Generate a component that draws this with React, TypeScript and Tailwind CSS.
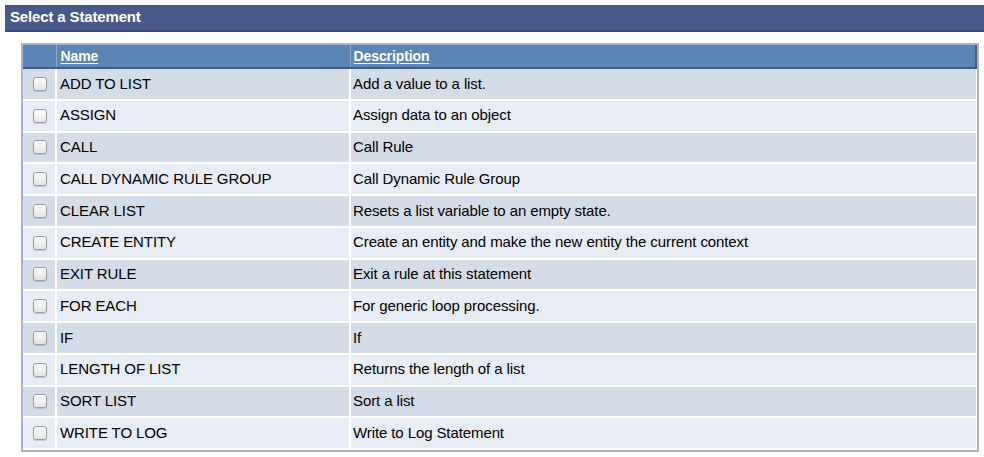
import { useState } from "react";

type Statement = { name: string; description: string };

const statements: Statement[] = [
  { name: "ADD TO LIST", description: "Add a value to a list." },
  { name: "ASSIGN", description: "Assign data to an object" },
  { name: "CALL", description: "Call Rule" },
  { name: "CALL DYNAMIC RULE GROUP", description: "Call Dynamic Rule Group" },
  { name: "CLEAR LIST", description: "Resets a list variable to an empty state." },
  { name: "CREATE ENTITY", description: "Create an entity and make the new entity the current context" },
  { name: "EXIT RULE", description: "Exit a rule at this statement" },
  { name: "FOR EACH", description: "For generic loop processing." },
  { name: "IF", description: "If" },
  { name: "LENGTH OF LIST", description: "Returns the length of a list" },
  { name: "SORT LIST", description: "Sort a list" },
  { name: "WRITE TO LOG", description: "Write to Log Statement" },
];

const Check = ({ on, onClick }: { on: boolean; onClick: () => void }) => (
  <button
    onClick={onClick}
    className="flex h-[14px] w-[14px] items-center justify-center rounded-[3px] border border-[#9d9d9d] bg-gradient-to-b from-white to-[#e4e4e4] shadow-[0_1px_1px_rgba(0,0,0,0.15)]"
  >
    {on && <span className="h-[6px] w-[6px] rounded-[1px] bg-[#3a5a90]" />}
  </button>
);

export default function App() {
  const [picked, setPicked] = useState<Record<string, boolean>>({});

  return (
    <div className="min-h-[457px] w-[984px] bg-white pt-[5px] font-['Liberation_Sans',Arial,sans-serif]">
      <div className="ml-[5px] flex h-[27px] items-center border-b-2 border-[#3b4a7c] bg-[#49598b] pl-[5px]">
        <h2 className="text-[15px] font-bold tracking-[-0.15px] text-white">Select a Statement</h2>
      </div>

      <div className="ml-[21px] mt-[11px] w-[958px] border-2 border-[#aab1c8]">
        <table className="w-full border-collapse text-[15px] tracking-[-0.1px] text-black">
          <thead>
            <tr className="h-[23px] bg-[#5b86b4] text-left text-[14px] font-bold text-white">
              <th className="w-[33px] border-r border-[#8fa9c9] border-b-2 border-b-[#3f5b86]" />
              <th className="w-[294px] border-r border-[#8fa9c9] border-b-2 border-b-[#3f5b86] pl-[4px] font-bold">
                <a href="#" className="underline underline-offset-2">Name</a>
              </th>
              <th className="border-b-2 border-r-2 border-b-[#3f5b86] border-r-[#3f5b86] pl-[3px] font-bold">
                <a href="#" className="underline underline-offset-2">Description</a>
              </th>
            </tr>
          </thead>
          <tbody>
            {statements.map((s, i) => (
              <tr
                key={s.name}
                className={`h-[31.75px] border-b-2 border-white ${i % 2 === 0 ? "bg-[#d4dce8]" : "bg-[#e7ecf5]"}`}
              >
                <td className="border-r-2 border-white">
                  <div className="flex justify-center pl-[1px]">
                    <Check
                      on={!!picked[s.name]}
                      onClick={() => setPicked((p) => ({ ...p, [s.name]: !p[s.name] }))}
                    />
                  </div>
                </td>
                <td className="border-r-2 border-white pl-[3px]">{s.name}</td>
                <td className="pl-[2px]">{s.description}</td>
              </tr>
            ))}
          </tbody>
        </table>
      </div>
    </div>
  );
}
